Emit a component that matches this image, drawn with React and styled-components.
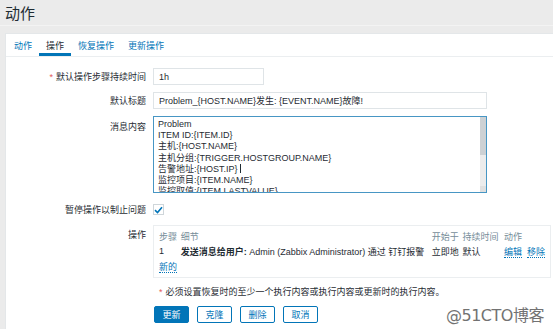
import React from 'react';
import styled, { createGlobalStyle } from 'styled-components';

const GlobalStyle = createGlobalStyle`
  html, body {
    margin: 0;
    padding: 0;
    background: #ebebeb;
    font-family: "Liberation Sans", "Noto Sans CJK SC", sans-serif;
    font-size: 9px;
    color: #1f2c33;
    overflow: hidden;
  }
`;

const Page = styled.div`
  position: relative;
  width: 553px;
  height: 329px;
  overflow: hidden;
`;

const Header = styled.div`
  height: 25px;
  display: flex;
  align-items: center;
  padding-left: 5px;
  border-bottom: 1px solid #f3f3f3;
`;

const Title = styled.h1`
  margin: 0;
  font-size: 15px;
  font-weight: normal;
  color: #1f2c33;
`;

const Panel = styled.div`
  margin: 7px 0 0 5px;
  width: 560px;
  height: 300px;
  background: #fff;
  border: 1px solid #e4e7e9;
`;

const Tabs = styled.div`
  display: flex;
  height: 22px;
  border-bottom: 1px solid #ebeef0;
`;

const Tab = styled.div`
  display: flex;
  align-items: center;
  padding: 0 7px;
  margin-left: ${p => (p.first ? '1px' : '0')};
  color: ${p => (p.active ? '#1f2c33' : '#0275b8')};
  border-bottom: 3px solid ${p => (p.active ? '#0275b8' : 'transparent')};
  padding-top: 3px;
`;

const Form = styled.div`
  padding-top: 11px;
`;

const Row = styled.div`
  display: flex;
  align-items: ${p => (p.top ? 'flex-start' : 'center')};
  margin-bottom: ${p => p.mb || 7}px;
`;

const Label = styled.div`
  width: 140px;
  flex-shrink: 0;
  text-align: right;
  padding-right: 7px;
  padding-top: ${p => p.pt || 0}px;
  color: #1f2c33;
`;

const Req = styled.span`
  color: #e45959;
  margin-right: 3px;
`;

const Input = styled.div`
  box-sizing: border-box;
  width: ${p => p.w}px;
  height: 17px;
  border: 1px solid #dfe4e7;
  padding: 0 5px;
  display: flex;
  align-items: center;
  white-space: nowrap;
`;

const TextArea = styled.div`
  box-sizing: border-box;
  width: 334px;
  height: 77px;
  border: 1px solid #4796c4;
  display: flex;
  overflow: hidden;
`;

const TextLines = styled.div`
  flex: 1;
  padding: 2px 4px;
  line-height: 11.2px;
  white-space: nowrap;
  overflow: hidden;
`;

const Scrollbar = styled.div`
  width: 6px;
  background: #ececec;
  display: flex;
  flex-direction: column;
  justify-content: space-between;
`;

const Thumb = styled.div`
  height: 38px;
  background: #cdd1d4;
`;

const Grip = styled.div`
  height: 6px;
  background: #e0e0e0;
`;

const Caret = styled.span`
  display: inline-block;
  width: 1px;
  height: 9px;
  background: #1f2c33;
  margin-left: 2px;
  vertical-align: -1px;
`;

const Checkbox = styled.div`
  box-sizing: border-box;
  width: 11px;
  height: 11px;
  border: 1px solid #cfd6da;
  display: flex;
  align-items: center;
  justify-content: center;
`;

const OpsBox = styled.div`
  box-sizing: border-box;
  width: 398px;
  height: 53px;
  border: 1px solid #ebeef0;
  padding: 3px 5px 0;
`;

const Table = styled.table`
  border-collapse: collapse;
  width: 100%;
  td, th {
    padding: 0;
    text-align: left;
    font-weight: normal;
    white-space: nowrap;
  }
  th {
    color: #768d99;
    height: 14px;
  }
  td {
    height: 16px;
  }
`;

const Link = styled.a`
  color: #0275b8;
  text-decoration: none;
  border-bottom: 1px dotted #0275b8;
  margin-right: ${p => p.mr || 0}px;
`;

const NewLink = styled.div`
  margin-top: 1px;
`;

const Note = styled.div`
  margin-left: 153px;
  margin-top: 6px;
  color: #1f2c33;
`;

const Buttons = styled.div`
  display: flex;
  gap: 8px;
  margin-left: 148px;
  margin-top: 8px;
`;

const Button = styled.div`
  box-sizing: border-box;
  width: 35px;
  height: 17px;
  display: flex;
  align-items: center;
  justify-content: center;
  border: 1px solid #0275b8;
  background: ${p => (p.primary ? '#0275b8' : '#fff')};
  color: ${p => (p.primary ? '#fff' : '#0275b8')};
  border-radius: 2px;
`;

const Watermark = styled.div`
  position: absolute;
  left: 446px;
  top: 302px;
  font-size: 16px;
  color: #5a5a5a;
  opacity: 0.85;
  font-family: "DejaVu Sans", "Noto Sans CJK SC", sans-serif;
  letter-spacing: -0.5px;
`;

const lines = [
  'Problem',
  'ITEM ID:{ITEM.ID}',
  '主机:{HOST.NAME}',
  '主机分组:{TRIGGER.HOSTGROUP.NAME}',
  '告警地址:{HOST.IP}',
  '监控项目:{ITEM.NAME}',
  '监控取值:{ITEM.LASTVALUE}',
];

export default function App() {
  return (
    <Page>
      <GlobalStyle />
      <Header>
        <Title>动作</Title>
      </Header>
      <Panel>
        <Tabs>
          <Tab first>动作</Tab>
          <Tab active>操作</Tab>
          <Tab>恢复操作</Tab>
          <Tab>更新操作</Tab>
        </Tabs>
        <Form>
          <Row>
            <Label><Req>*</Req>默认操作步骤持续时间</Label>
            <Input w={111}>1h</Input>
          </Row>
          <Row>
            <Label>默认标题</Label>
            <Input w={334}>Problem_{'{HOST.NAME}'}发生: {'{EVENT.NAME}'}故障!</Input>
          </Row>
          <Row top mb={10}>
            <Label pt={4}>消息内容</Label>
            <TextArea>
              <TextLines>
                {lines.map((l, i) => (
                  <div key={i}>
                    {l}
                    {i === 4 && <Caret />}
                  </div>
                ))}
              </TextLines>
              <Scrollbar>
                <Thumb />
                <Grip />
              </Scrollbar>
            </TextArea>
          </Row>
          <Row mb={9}>
            <Label>暂停操作以制止问题</Label>
            <Checkbox>
              <svg width="9" height="8" viewBox="0 0 9 8">
                <path d="M1 4.2 L3.5 6.5 L8 1.2" fill="none" stroke="#0275b8" strokeWidth="1.6" />
              </svg>
            </Checkbox>
          </Row>
          <Row top mb={0}>
            <Label pt={3}>操作</Label>
            <OpsBox>
              <Table>
                <colgroup>
                  <col style={{ width: 22 }} />
                  <col style={{ width: 252 }} />
                  <col style={{ width: 31 }} />
                  <col style={{ width: 42 }} />
                  <col />
                </colgroup>
                <thead>
                  <tr>
                    <th>步骤</th>
                    <th>细节</th>
                    <th>开始于</th>
                    <th>持续时间</th>
                    <th>动作</th>
                  </tr>
                </thead>
                <tbody>
                  <tr>
                    <td>1</td>
                    <td><b>发送消息给用户:</b> Admin (Zabbix Administrator) 通过 钉钉报警</td>
                    <td>立即地</td>
                    <td>默认</td>
                    <td><Link mr={5}>编辑</Link><Link>移除</Link></td>
                  </tr>
                </tbody>
              </Table>
              <NewLink><Link>新的</Link></NewLink>
            </OpsBox>
          </Row>
          <Note><Req>*</Req>必须设置恢复时的至少一个执行内容或执行内容或更新时的执行内容。</Note>
          <Buttons>
            <Button primary>更新</Button>
            <Button>克隆</Button>
            <Button>删除</Button>
            <Button>取消</Button>
          </Buttons>
        </Form>
      </Panel>
      <Watermark>@51CTO博客</Watermark>
    </Page>
  );
}
